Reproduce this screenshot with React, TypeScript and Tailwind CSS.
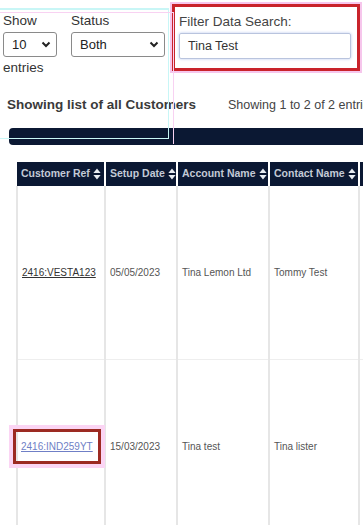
import React from "react";

const NAVY = "bg-[#0b1833]";

const SortIcon = () => (
  <svg width="8" height="12" viewBox="0 0 8 12" className="ml-[3px] shrink-0">
    <path d="M4 0.5 L7.6 5 H0.4 Z" fill="#e8ecf2" />
    <path d="M4 11.5 L7.6 7 H0.4 Z" fill="#e8ecf2" />
  </svg>
);

const Chevron = () => (
  <svg width="10" height="7" viewBox="0 0 10 7" className="shrink-0">
    <path d="M1.5 1.5 L5 5 L8.5 1.5" fill="none" stroke="#222" strokeWidth="2" />
  </svg>
);

const columns = [
  { label: "Customer Ref", width: "w-[88px]" },
  { label: "Setup Date", width: "w-[72px]" },
  { label: "Account Name", width: "w-[92px]" },
  { label: "Contact Name", width: "w-[90px]" },
  { label: "Type", width: "w-[60px]" },
];

const rows = [
  {
    ref: "2416:VESTA123",
    date: "05/05/2023",
    account: "Tina Lemon Ltd",
    contact: "Tommy Test",
    highlight: false,
  },
  {
    ref: "2416:IND259YT",
    date: "15/03/2023",
    account: "Tina test",
    contact: "Tina lister",
    highlight: true,
  },
];

const cell =
  "border-x-2 border-[#e6e6e6] px-[4px] align-middle text-[10px] text-[#555]";

export default function App() {
  return (
    <div className="relative w-[363px] h-[525px] overflow-hidden bg-white text-[#333] font-['Liberation_Sans',Arial,sans-serif]">
      {/* faint capture guides over the top-left controls */}
      <div className="pointer-events-none absolute left-0 top-[8px] h-[131px] w-[169px] border-t-2 border-r border-b border-[#c8f6f6]" />
      <div className="pointer-events-none absolute left-0 top-[12px] h-[132px] w-[174px] border-t border-r border-[#f8d2f2]" />

      {/* filters */}
      <div className="flex items-start pl-[3px]">
        <div className="mt-[12px] flex w-[54px] flex-col">
          <span className="text-[13.5px] leading-[17px]">Show</span>
          <div className="mt-[3px] flex h-[25px] w-[54px] items-center justify-between rounded-[3px] border border-[#8a8a8a] pl-[8px] pr-[5px] text-[13px] text-[#222]">
            10
            <Chevron />
          </div>
          <span className="mt-[2px] text-[13.5px] leading-[17px]">entries</span>
        </div>

        <div className="ml-[14px] mt-[12px] flex w-[94px] flex-col">
          <span className="text-[13.5px] leading-[17px]">Status</span>
          <div className="mt-[3px] flex h-[25px] w-[94px] items-center justify-between rounded-[3px] border border-[#8a8a8a] pl-[8px] pr-[5px] text-[13px] text-[#222]">
            Both
            <Chevron />
          </div>
        </div>

        <div className="ml-[7px] mt-[4px] h-[67px] w-[188px] border-[3px] border-[#c9232b] pl-[4px] pt-[6px] shadow-[0_0_0_2px_#f6c6ec]">
          <span className="block text-[13.5px] leading-[17px] text-[#444]">
            Filter Data Search:
          </span>
          <div className="mt-[3px] flex h-[26px] w-[172px] items-center rounded-[2px] border border-[#b9c4de] px-[8px] text-[12.5px] text-[#333] shadow-[0_0_3px_#b7c7ee]">
            Tina Test
          </div>
        </div>
      </div>

      {/* heading row */}
      <div className="mt-[20px] flex items-baseline whitespace-nowrap pl-[7px]">
        <span className="text-[13.5px] font-bold leading-[18px] text-[#3a3a3a]">
          Showing list of all Customers
        </span>
        <span className="ml-[32px] text-[12.5px] text-[#444]">
          Showing 1 to 2 of 2 entries
        </span>
      </div>

      {/* dark band */}
      <div className={`ml-[9px] mt-[13px] h-[17px] rounded-l-[4px] ${NAVY}`} />

      {/* table */}
      <table className="ml-[16px] mt-[17px] w-[402px] table-fixed border-collapse whitespace-nowrap">
        <colgroup>
          {columns.map((c) => (
            <col key={c.label} className={c.width} />
          ))}
        </colgroup>
        <thead>
          <tr>
            {columns.map((c, i) => (
              <th
                key={c.label}
                className={`h-[24px] ${NAVY} overflow-hidden border-white p-0 text-left align-middle ${
                  i === 0 ? "border-r-2" : "border-x-2"
                }`}
              >
                <div className="flex items-center pl-[4px] text-[10.5px] font-bold text-[#c3cad6]">
                  {c.label}
                  <SortIcon />
                </div>
              </th>
            ))}
          </tr>
        </thead>
        <tbody>
          {rows.map((r) => (
            <tr key={r.ref} className="h-[174px] border-b border-[#eeeeee]">
              <td className={cell}>
                {r.highlight ? (
                  <span className="-ml-[9px] inline-block border-[3px] border-[#9c2a22] px-[5px] py-[7px] shadow-[0_0_0_4px_#fbd5f4]">
                    <a className="text-[#6f7fc6] underline">{r.ref}</a>
                  </span>
                ) : (
                  <a className="text-[#333] underline">{r.ref}</a>
                )}
              </td>
              <td className={cell}>{r.date}</td>
              <td className={cell}>{r.account}</td>
              <td className={cell}>{r.contact}</td>
              <td className={cell} />
            </tr>
          ))}
        </tbody>
      </table>
    </div>
  );
}
